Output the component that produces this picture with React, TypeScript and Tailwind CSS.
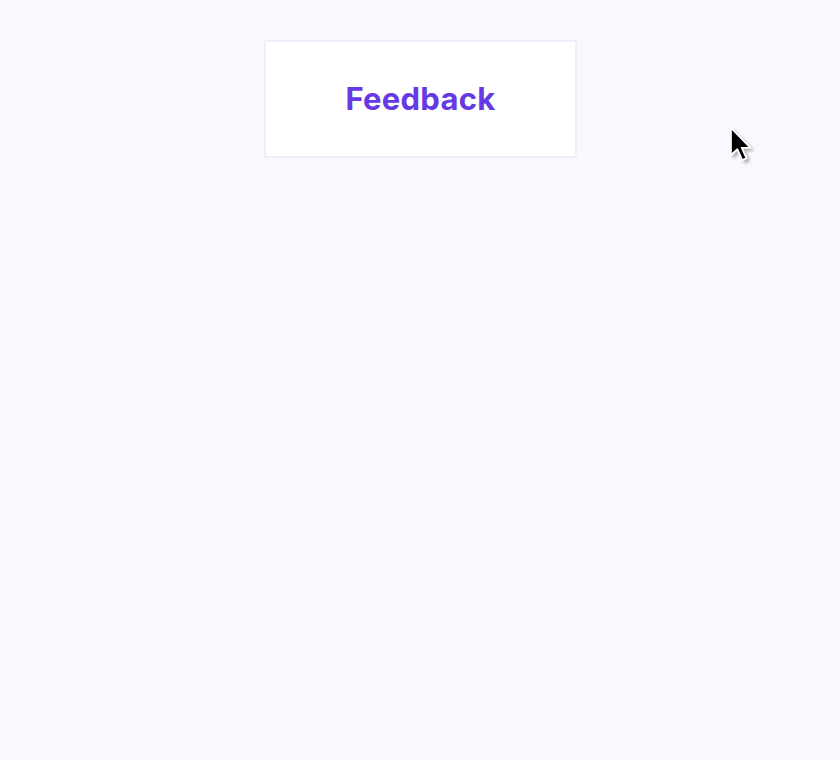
import React from 'react';

// Mouse pointer drawn over the page
const Cursor = () => (
    <svg
        className="absolute left-[727px] top-[125px]"
        width="32"
        height="42"
        viewBox="0 0 32 42"
    >
        <defs>
            <filter id="sh" x="-50%" y="-50%" width="200%" height="200%">
                <feDropShadow dx="2" dy="2" stdDeviation="1.2" floodColor="#000" floodOpacity="0.3" />
            </filter>
        </defs>
        <g transform="translate(4 3) scale(1.28)">
            <path
                d="M0 0 L0 21 L5 16.6 L8.8 25 L12 23.6 L8.3 15.4 L15 15.4 Z"
                fill="#000"
                stroke="#fff"
                strokeWidth="1.3"
                strokeLinejoin="round"
                filter="url(#sh)"
            />
        </g>
    </svg>
);

export default function App() {
    return (
        <div className="relative w-full min-h-[760px] bg-[#f8f8fe] font-['Inter',sans-serif]">
            <div className="flex justify-center pt-10">
                <div className="ml-[1px] w-[313px] h-[118px] bg-white border-2 border-[#efeefa] flex items-center justify-center">
                    <span className="text-[31px] font-bold tracking-[0.3px] text-[#6539e3]">Feedback</span>
                </div>
            </div>
            <Cursor />
        </div>
    );
}
